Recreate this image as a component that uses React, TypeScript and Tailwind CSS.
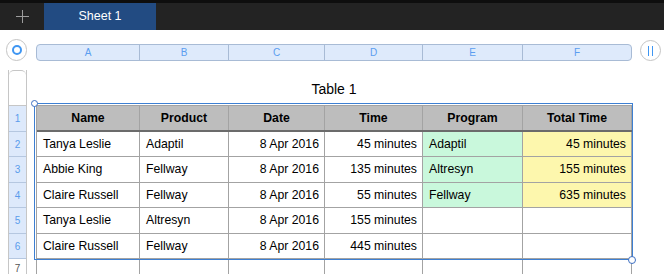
const font = { fontFamily: '"Liberation Sans", Arial, sans-serif' };

const columns = [
  { label: "A", head: "w-[103px] border-r", cell: "w-[103px]" },
  { label: "B", head: "w-[89px] border-r", cell: "w-[89px]" },
  { label: "C", head: "w-[96px] border-r", cell: "w-[96px]" },
  { label: "D", head: "w-[98px] border-r", cell: "w-[98px]" },
  { label: "E", head: "w-[100px] border-r", cell: "w-[100px]" },
  { label: "F", head: "w-[108px]", cell: "w-[109px]" },
];

const headers = ["Name", "Product", "Date", "Time", "Program", "Total Time"];

const rows = [
  { h: "h-[25px]", cells: ["Tanya Leslie", "Adaptil", "8 Apr 2016", "45 minutes", "Adaptil", "45 minutes"] },
  { h: "h-[26px]", cells: ["Abbie King", "Fellway", "8 Apr 2016", "135 minutes", "Altresyn", "155 minutes"] },
  { h: "h-[25px]", cells: ["Claire Russell", "Fellway", "8 Apr 2016", "55 minutes", "Fellway", "635 minutes"] },
  { h: "h-[26px]", cells: ["Tanya Leslie", "Altresyn", "8 Apr 2016", "155 minutes", "", ""] },
  { h: "h-[25px]", cells: ["Claire Russell", "Fellway", "8 Apr 2016", "445 minutes", "", ""] },
];

// alignment + fill per column for body cells
const cellStyle = (col: number, row: number) => {
  const right = col === 2 || col === 3 || col === 5;
  let bg = "bg-white";
  if (row < 3 && col === 4) bg = "bg-[#c9f8dc]";
  if (row < 3 && col === 5) bg = "bg-[#fdf7ad]";
  return `${right ? "justify-end pr-[5px]" : "justify-start pl-[6px]"} ${bg}`;
};

const rowHeaderHeights = ["h-[26px]", "h-[25px]", "h-[26px]", "h-[25px]", "h-[26px]", "h-[25px]"];

const App = () => {
  return (
    <div className="w-[664px] h-[274px] overflow-hidden bg-white" style={font}>
      {/* Top bar with sheet tab */}
      <div className="h-[30px] bg-[#232323] border-t-[3px] border-[#0e0e0e] flex items-stretch">
        <div className="w-[44px] flex items-center justify-center">
          <svg width="13" height="13" viewBox="0 0 13 13">
            <line x1="6.5" y1="0" x2="6.5" y2="13" stroke="#9c9c9c" strokeWidth="1" />
            <line x1="0" y1="6.5" x2="13" y2="6.5" stroke="#9c9c9c" strokeWidth="1" />
          </svg>
        </div>
        <div className="w-[112px] bg-[#224b82] flex items-center justify-center text-white text-[12.5px]">
          Sheet 1
        </div>
      </div>

      <div className="flex">
        {/* Left gutter */}
        <div className="w-[36px] flex flex-col">
          <div className="mt-[9px] ml-[6px] w-[21px] h-[22px] rounded-full border border-[#c4c4c4] bg-white flex items-center justify-center">
            <div className="w-[10px] h-[10px] rounded-full border-2 border-[#3f96f2]" />
          </div>
          <div className="mt-[9px] ml-[8px] w-[19px] flex flex-col border-l border-r border-[#c6c6c6]">
            <div className="h-[36px] border-t border-b border-[#c6c6c6] rounded-t-[5px]" />
            {rowHeaderHeights.map((h, i) => (
              <div
                key={i}
                className={`${h} bg-[#dde9fb] border-b border-[#b5c7e0] flex items-center justify-center text-[10px] text-[#5a9cec]`}
              >
                {i + 1}
              </div>
            ))}
            <div className="h-[20px] flex items-start justify-center pt-[2px] text-[10px] text-[#555]">7</div>
          </div>
        </div>

        {/* Sheet area */}
        <div className="w-[596px] flex flex-col">
          {/* Column letters */}
          <div className="mt-[14px] h-[17px] flex border border-[#a8bbd5] rounded-[4px] bg-[#deeafb] overflow-hidden">
            {columns.map((c) => (
              <div
                key={c.label}
                className={`${c.head} border-[#a8bbd5] flex items-center justify-center text-[10px] text-[#5b9df0]`}
              >
                {c.label}
              </div>
            ))}
          </div>

          <div className="relative mt-[9px]">
            <div className="h-[35px] flex items-center justify-center pt-[3px] text-[14px] text-black">
              Table 1
            </div>

            <div className="border-t border-l border-[#a3a3a3] text-[12.25px] text-black">
              {/* Header row */}
              <div className="flex h-[26px] bg-[#bdbdbd] border-b-2 border-[#6b6b6b]">
                {headers.map((t, i) => (
                  <div
                    key={t}
                    className={`${columns[i].cell} border-r border-[#a3a3a3] flex items-center justify-center font-bold`}
                  >
                    {t}
                  </div>
                ))}
              </div>
              {rows.map((r, ri) => (
                <div key={ri} className={`flex ${r.h} border-b border-[#a3a3a3]`}>
                  {r.cells.map((t, ci) => (
                    <div
                      key={ci}
                      className={`${columns[ci].cell} ${cellStyle(ci, ri)} border-r border-[#a3a3a3] flex items-center`}
                    >
                      {t}
                    </div>
                  ))}
                </div>
              ))}
              <div className="flex h-[20px]">
                {columns.map((c) => (
                  <div key={c.label} className={`${c.cell} border-r border-[#a3a3a3]`} />
                ))}
              </div>
            </div>

            {/* Selection outline */}
            <div className="absolute left-[-2px] top-[33px] w-[599px] h-[157px] border border-[#3d7fd2] pointer-events-none" />
            <div className="absolute left-[-5px] top-[30px] w-[7px] h-[7px] rounded-full bg-white border border-[#3d6fc2]" />
            <div className="absolute left-[592px] top-[186px] w-[8px] h-[8px] rounded-full bg-white border border-[#3d6fc2]" />
          </div>
        </div>

        {/* Right gutter */}
        <div className="flex-1">
          <div className="mt-[10px] ml-[8px] w-[21px] h-[21px] rounded-full border border-[#c4c4c4] bg-white flex items-center justify-center gap-[3px]">
            <div className="w-px h-[10px] bg-[#3f96f2]" />
            <div className="w-px h-[10px] bg-[#3f96f2]" />
          </div>
        </div>
      </div>
    </div>
  );
};

export default App;
